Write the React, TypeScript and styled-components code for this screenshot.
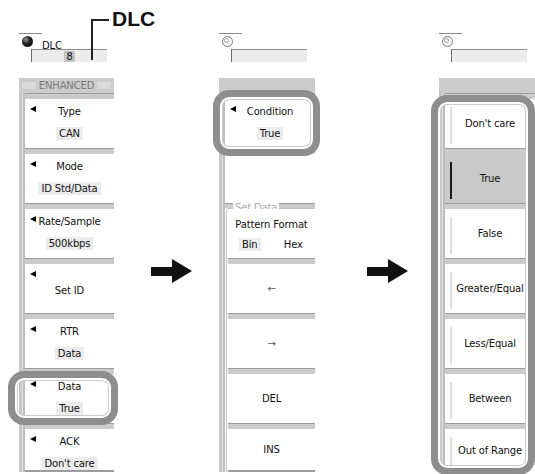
import React from 'react';
import styled, {createGlobalStyle} from 'styled-components';

const GlobalStyle = createGlobalStyle`
    html, body {
        margin: 0;
        padding: 0;
        background: #fff;
        overflow: hidden;
    }
    body {
        font-family: "DejaVu Sans", Verdana, sans-serif;
        font-size: 10px;
        letter-spacing: -0.15px;
        color: #111;
    }
`;

const Page = styled.div`
    display: flex;
    align-items: flex-start;
    width: 535px;
    height: 474px;
    padding-left: 19px;
    box-sizing: border-box;
    overflow: hidden;
`;

const Column = styled.div<{$w: number; $ml?: number}>`
    position: relative;
    flex: none;
    width: ${(p) => p.$w}px;
    margin-left: ${(p) => p.$ml ?? 0}px;
`;

const ArrowSlot = styled.div<{$ml: number}>`
    flex: none;
    width: 41px;
    height: 24px;
    margin-top: 259px;
    margin-left: ${(p) => p.$ml}px;
`;

// top of each panel: knob, name and value field
const Top = styled.div`
    height: 78px;
    padding-top: 33px;
    box-sizing: border-box;
`;

const Rule = styled.div`
    width: 23px;
    height: 1px;
    background: #8a8a8a;
`;

const KnobRow = styled.div`
    display: flex;
    align-items: flex-start;
    gap: 9px;
    height: 12px;
    margin-top: 2px;
    padding-left: 3px;
`;

const Knob = styled.span<{$on?: boolean}>`
    position: relative;
    flex: none;
    width: 11px;
    height: 11px;
    border-radius: 50%;
    box-sizing: border-box;
    background: ${(p) =>
        p.$on
            ? 'radial-gradient(circle at 35% 32%, #9a9a9a 0, #222 40%, #000 100%)'
            : '#fff'};
    border: ${(p) => (p.$on ? 'none' : '1px solid #7a7a7a')};

    &::after {
        content: '';
        display: ${(p) => (p.$on ? 'none' : 'block')};
        position: absolute;
        left: 1px;
        top: 1px;
        width: 3px;
        height: 3px;
        border-radius: 50%;
        border: 1px solid #9a9a9a;
    }
`;

const KnobName = styled.span`
    margin-top: 5px;
    line-height: 10px;
    font-size: 10px;
`;

const Field = styled.div`
    display: flex;
    justify-content: center;
    align-items: center;
    width: 76px;
    height: 13px;
    margin: 1px 0 0 12px;
    box-sizing: border-box;
    background: #ececec;
    border-top: 1px solid #8c8c8c;
    border-left: 1px solid #6a6a6a;
`;

const FieldChip = styled.span`
    background: #c4c4c4;
    padding: 0 2px;
    line-height: 11px;
    font-size: 10px;
`;

const CalloutLine = styled.div`
    position: absolute;
    left: 72px;
    top: 19px;
    width: 16px;
    height: 39px;
    border-left: 2px solid #222;
    border-top: 2px solid #222;
`;

const CalloutText = styled.span`
    position: absolute;
    left: 93px;
    top: 7px;
    font: bold 21px/24px "Liberation Sans", Arial, sans-serif;
    letter-spacing: 0;
    color: #111;
`;

// soft key panel
const Header = styled.div`
    display: flex;
    align-items: center;
    gap: 3px;
    height: 15px;
    padding: 0 3px;
    background: #cbcbcb;
`;

const HeaderBar = styled.span`
    flex: 1;
    height: 7px;
    background: #dadada;
`;

const HeaderTitle = styled.span`
    color: #7c7c7c;
    font-size: 10px;
    line-height: 12px;
`;

const Body = styled.div`
    display: flex;
`;

const Strip = styled.div`
    flex: none;
    width: 6px;
    background: linear-gradient(90deg, #c6c6c6 0 3px, #e2e2e2 3px 4px, #bdbdbd 4px 6px);
`;

const List = styled.div`
    flex: 1;
    display: flex;
    flex-direction: column;
`;

const Sep = styled.div<{$h?: number}>`
    height: ${(p) => p.$h ?? 6}px;
    box-sizing: border-box;
    background: #cbcbcb;
    border-top: 1px solid #9c9c9c;
`;

const Bottom = styled.div`
    height: 2px;
    background: #9c9c9c;
`;

const Key = styled.div<{$h?: number; $selected?: boolean; $center?: boolean}>`
    position: relative;
    height: ${(p) => p.$h ?? 49}px;
    display: flex;
    flex-direction: column;
    align-items: center;
    justify-content: ${(p) => (p.$center ? 'center' : 'flex-start')};
    background: ${(p) => (p.$selected ? '#c9c9c9' : '#fff')};
`;

const KeyHead = styled.div`
    display: grid;
    grid-template-columns: 12px 1fr 12px;
    align-items: start;
    width: 100%;
    height: 12px;
    margin-top: 7px;
`;

const Pointer = styled.span`
    width: 0;
    height: 0;
    margin: 0 0 0 5px;
    border-top: 3.5px solid transparent;
    border-bottom: 3.5px solid transparent;
    border-right: 6px solid #000;
`;

const KeyLabel = styled.span`
    text-align: center;
    line-height: 12px;
    white-space: nowrap;
`;

const KeyValue = styled.span<{$plain?: boolean}>`
    margin-top: ${(p) => (p.$plain ? 1 : 9)}px;
    padding: 1px 3px;
    line-height: 11px;
    background: ${(p) => (p.$plain ? 'transparent' : '#ececec')};
`;

const Options = styled.div`
    display: grid;
    grid-template-columns: 1fr 1fr;
    justify-items: center;
    width: 100%;
    margin-top: 7px;
`;

const Option = styled.span<{$on?: boolean}>`
    padding: 1px 3px;
    line-height: 11px;
    background: ${(p) => (p.$on ? '#ececec' : 'transparent')};
`;

const Glyph = styled.span`
    color: #555;
    line-height: 12px;
`;

const Choice = styled(Key)`
    &::before {
        content: '';
        position: absolute;
        left: 5px;
        top: 8px;
        bottom: 4px;
        width: 2px;
        background: ${(p) => (p.$selected ? '#1c1c1c' : '#dcdcdc')};
    }
`;

const Group = styled.div`
    position: relative;
    display: flex;
    flex-direction: column;
    margin-left: 1px;
    border-top: 1px solid #c2c2c2;
    border-left: 1px solid #c2c2c2;
    border-top-left-radius: 3px;
    padding-left: 1px;
`;

const Legend = styled.span`
    position: absolute;
    left: 6px;
    top: -7px;
    padding: 0 2px;
    background: #fff;
    color: #aaaaaa;
    line-height: 12px;
`;

const Ring = styled.div<{$t: number; $l: number; $w: number; $h: number}>`
    position: absolute;
    top: ${(p) => p.$t}px;
    left: ${(p) => p.$l}px;
    width: ${(p) => p.$w}px;
    height: ${(p) => p.$h}px;
    box-sizing: border-box;
    border: 7px solid #8e8e8e;
    border-radius: 16px;
    box-shadow: inset 0 0 0 2px #fff, inset 0 0 0 3px #cacaca;
    pointer-events: none;
`;

const BigArrow = () => (
    <svg width="41" height="24" viewBox="0 0 41 24">
        <polygon points="0,8 21,8 21,0 41,12 21,24 21,17 0,17" fill="#111" />
    </svg>
);

type SoftKeyProps = {label: string; value?: string; h?: number; splitLabel?: boolean};

const SoftKey = ({label, value, h, splitLabel}: SoftKeyProps) => (
    <Key $h={h}>
        <KeyHead>
            <Pointer />
            <KeyLabel>{splitLabel ? '' : label}</KeyLabel>
        </KeyHead>
        {splitLabel ? <KeyValue $plain>{label}</KeyValue> : <KeyValue>{value}</KeyValue>}
    </Key>
);

const leftKeys: SoftKeyProps[] = [
    {label: 'Type', value: 'CAN'},
    {label: 'Mode', value: 'ID Std/Data'},
    {label: 'Rate/Sample', value: '500kbps'},
    {label: 'Set ID', splitLabel: true},
    {label: 'RTR', value: 'Data'},
    {label: 'Data', value: 'True'},
    {label: 'ACK', value: "Don't care", h: 41},
];

const choices = ['Don\'t care', 'True', 'False', 'Greater/Equal', 'Less/Equal', 'Between', 'Out of Range'];

const Knobs = ({on, name, chip}: {on?: boolean; name?: string; chip?: string}) => (
    <Top>
        <Rule />
        <KnobRow>
            <Knob $on={on} />
            {name && <KnobName>{name}</KnobName>}
        </KnobRow>
        <Field>{chip && <FieldChip>{chip}</FieldChip>}</Field>
    </Top>
);

const App = () => {
    return (
        <>
            <GlobalStyle />
            <Page>
                <Column $w={95}>
                    <Knobs on name="DLC" chip="8" />
                    <CalloutLine />
                    <CalloutText>DLC</CalloutText>
                    <Header>
                        <HeaderBar />
                        <HeaderTitle>ENHANCED</HeaderTitle>
                        <HeaderBar />
                    </Header>
                    <Body>
                        <Strip />
                        <List>
                            {leftKeys.map((k) => (
                                <React.Fragment key={k.label}>
                                    <Sep />
                                    <SoftKey {...k} />
                                </React.Fragment>
                            ))}
                            <Bottom />
                        </List>
                    </Body>
                    <Ring $t={371} $l={-11} $w={110} $h={54} />
                </Column>

                <ArrowSlot $ml={37}>
                    <BigArrow />
                </ArrowSlot>

                <Column $w={96} $ml={27}>
                    <Knobs />
                    <Header />
                    <Body>
                        <Strip />
                        <List>
                            <Sep />
                            <SoftKey label="Condition" value="True" />
                            <Sep />
                            <Key />
                            <Sep $h={5} />
                            <Group>
                                <Legend>Set Data</Legend>
                                <Key>
                                    <KeyLabel style={{marginTop: 10}}>Pattern Format</KeyLabel>
                                    <Options>
                                        <Option $on>Bin</Option>
                                        <Option>Hex</Option>
                                    </Options>
                                </Key>
                                <Sep />
                                <Key $center>
                                    <Glyph>←</Glyph>
                                </Key>
                                <Sep />
                                <Key $center>
                                    <Glyph>→</Glyph>
                                </Key>
                                <Sep />
                                <Key $center>
                                    <KeyLabel>DEL</KeyLabel>
                                </Key>
                                <Sep />
                                <Key $center $h={41}>
                                    <KeyLabel>INS</KeyLabel>
                                </Key>
                                <Bottom />
                            </Group>
                        </List>
                    </Body>
                    <Ring $t={90} $l={-6} $w={107} $h={66} />
                </Column>

                <ArrowSlot $ml={52}>
                    <BigArrow />
                </ArrowSlot>

                <Column $w={96} $ml={31}>
                    <Knobs />
                    <Header />
                    <Body>
                        <Strip />
                        <List>
                            {choices.map((c, i) => (
                                <React.Fragment key={c}>
                                    <Sep />
                                    <Choice $center $selected={c === 'True'} $h={i === 6 ? 43 : 49}>
                                        <KeyLabel>{c}</KeyLabel>
                                    </Choice>
                                </React.Fragment>
                            ))}
                        </List>
                    </Body>
                    <Ring $t={95} $l={-8} $w={104} $h={380} />
                </Column>
            </Page>
        </>
    );
};

export default App;
